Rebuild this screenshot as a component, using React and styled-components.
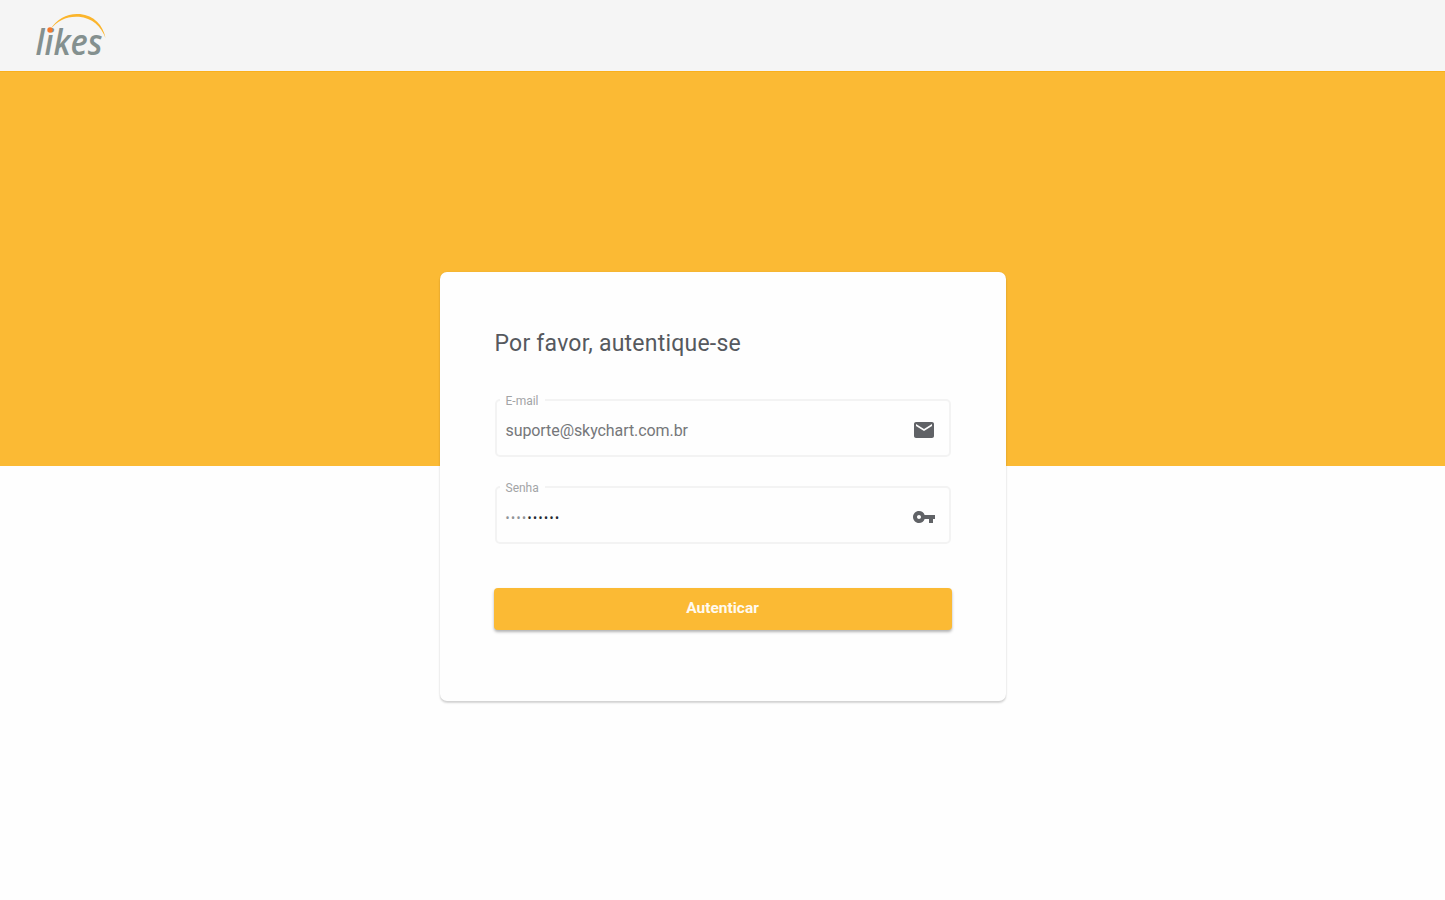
import React from 'react'
import styled, { createGlobalStyle } from 'styled-components'
import { MdEmail, MdVpnKey } from 'react-icons/md'

const GlobalStyle = createGlobalStyle`
  * {
    box-sizing: border-box;
  }
  body {
    margin: 0;
    background: #fefefe;
    font-family: Roboto, 'Liberation Sans', sans-serif;
  }
`

const Page = styled.div`
  height: 900px;
  overflow: hidden;
`

const Header = styled.header`
  height: 71px;
  padding-left: 28px;
  background: #f5f5f5;
`

const Banner = styled.div`
  height: 395px;
  background: #fbba34;
  border-top: 1px solid #f9b01c;
`

const Card = styled.form`
  position: relative;
  width: 566px;
  height: 429px;
  margin: -194px auto 0;
  padding: 57px 55px 0;
  background: #fefefe;
  border-radius: 7px;
  box-shadow: 0 2px 2px rgba(0, 0, 0, 0.16), 0 0 2px rgba(0, 0, 0, 0.08);
`

const Title = styled.h1`
  margin: 0 0 41px;
  font-size: 23px;
  line-height: 29px;
  font-weight: 400;
  letter-spacing: 0.22px;
  color: #56595e;
`

const FieldBox = styled.div`
  position: relative;
  display: flex;
  align-items: center;
  justify-content: space-between;
  height: 58px;
  margin-bottom: 29px;
  padding: 3px 13px 0 9px;
  border: 2px solid #f3f3f3;
  border-radius: 5px;

  svg {
    width: 24px;
    height: 24px;
    color: #606266;
  }
`

const Label = styled.label`
  position: absolute;
  top: -7px;
  left: 3px;
  padding: 0 6px;
  background: #fefefe;
  font-size: 12px;
  line-height: 14px;
  color: #a2a4a6;
`

const Value = styled.span`
  padding-top: 2px;
  font-size: 16px;
  line-height: 20px;
  letter-spacing: -0.08px;
  color: #75777a;
`

const Password = styled(Value)`
  font-size: 12px;
  letter-spacing: 1.44px;
  color: #23282f;
`

const FadedDots = styled.span`
  color: #8f9397;
`

const Button = styled.button`
  display: block;
  width: 458px;
  height: 42px;
  margin: 44px 0 0 -1px;
  padding: 0 0 3px;
  border: 0;
  border-radius: 4px;
  background: #fbba34;
  box-shadow: 0 2px 3px rgba(0, 0, 0, 0.3);
  font-family: inherit;
  font-size: 15.5px;
  font-weight: 700;
  color: #fffaf0;
`

const LogoSvg = styled.svg`
  display: block;
  overflow: visible;
`

const Logo = () => (
  <LogoSvg width="90" height="70" viewBox="28 0 90 70" role="img" aria-label="likes">
    <text
      x="35.5"
      y="55"
      fontFamily="'Open Sans', sans-serif"
      fontSize="36"
      fontStyle="italic"
      fontWeight="600"
      textLength="67"
      lengthAdjust="spacingAndGlyphs"
      fill="#84908f"
    >
      likes
    </text>
    <path d="M50 30C57 18 68 13 80 14C94 15.500 103 25 105.500 38C101 26 92 18 79 16.800C67 16 58 20 50 30Z" fill="#fbb52c" />
    <circle cx="50" cy="30" r="2.700" fill="#f47a2b" />
  </LogoSvg>
)

const Field = ({ label, icon, children }) => (
  <FieldBox>
    <Label>{label}</Label>
    {children}
    {icon}
  </FieldBox>
)

const App = () => (
  <Page>
    <GlobalStyle />
    <Header>
      <Logo />
    </Header>
    <Banner />
    <Card>
      <Title>Por favor, autentique-se</Title>
      <Field label="E-mail" icon={<MdEmail />}>
        <Value>suporte@skychart.com.br</Value>
      </Field>
      <Field label="Senha" icon={<MdVpnKey />}>
        <Password>
          <FadedDots>••••</FadedDots>••••••
        </Password>
      </Field>
      <Button type="button">Autenticar</Button>
    </Card>
  </Page>
)

export default App
